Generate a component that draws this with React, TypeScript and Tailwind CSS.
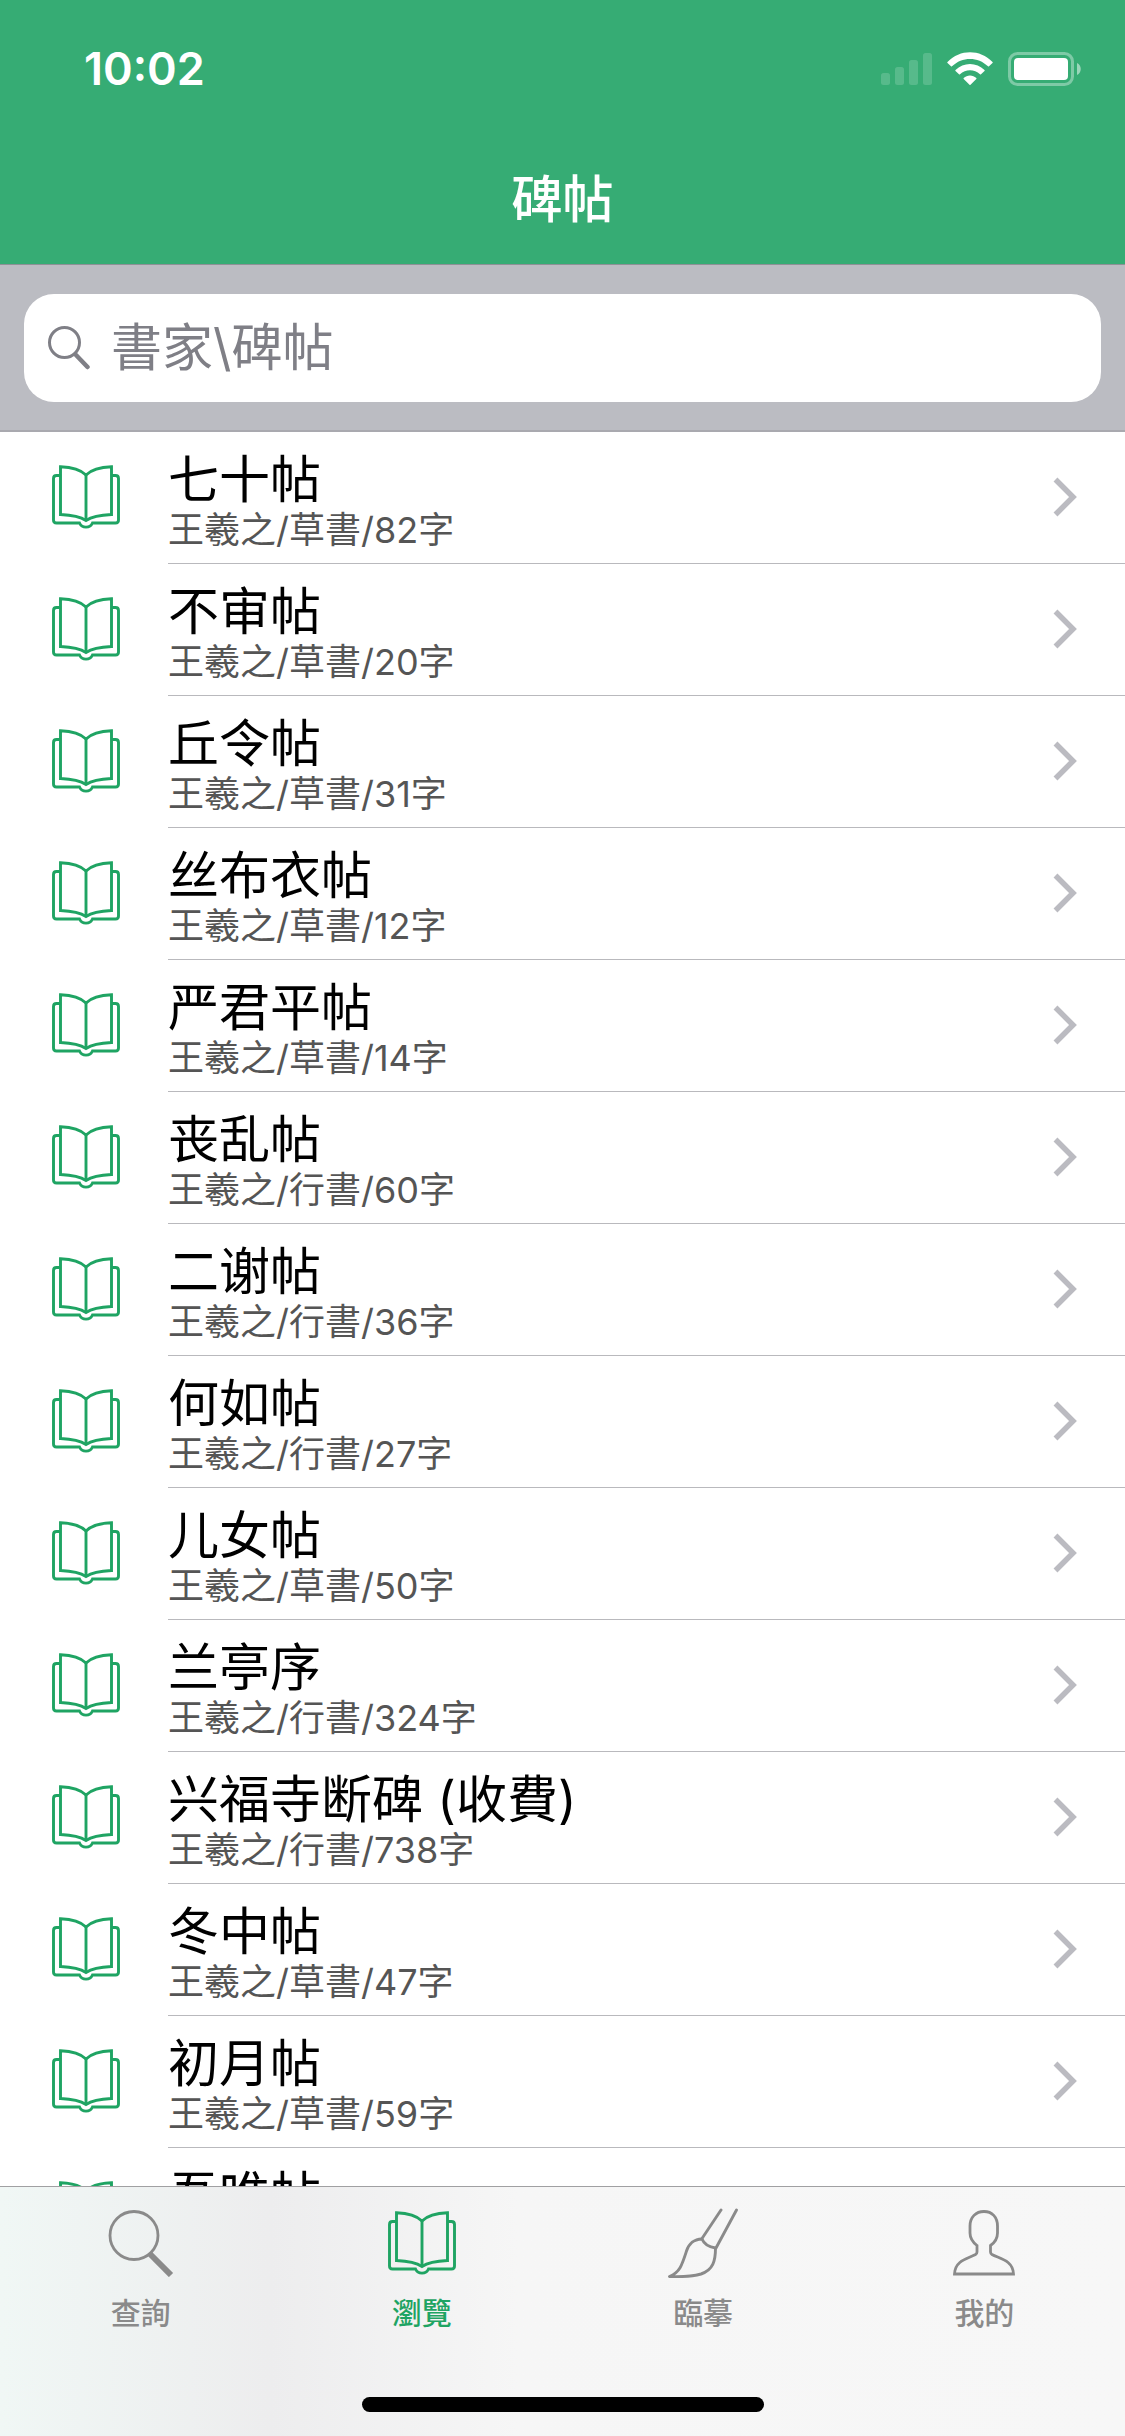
import React from 'react'

interface Work {
  title: string;
  detail: string;
}

const works: Work[] = [
  { title: '七十帖', detail: '王羲之/草書/82字' },
  { title: '不审帖', detail: '王羲之/草書/20字' },
  { title: '丘令帖', detail: '王羲之/草書/31字' },
  { title: '丝布衣帖', detail: '王羲之/草書/12字' },
  { title: '严君平帖', detail: '王羲之/草書/14字' },
  { title: '丧乱帖', detail: '王羲之/行書/60字' },
  { title: '二谢帖', detail: '王羲之/行書/36字' },
  { title: '何如帖', detail: '王羲之/行書/27字' },
  { title: '儿女帖', detail: '王羲之/草書/50字' },
  { title: '兰亭序', detail: '王羲之/行書/324字' },
  { title: '兴福寺断碑 (收費)', detail: '王羲之/行書/738字' },
  { title: '冬中帖', detail: '王羲之/草書/47字' },
  { title: '初月帖', detail: '王羲之/草書/59字' },
  { title: '吾唯帖', detail: '王羲之/草書/40字' },
]

const BookIcon: React.FC = () => (
  <svg width="68" height="64" viewBox="0 0 68 64" fill="none" stroke="currentColor" strokeWidth="2.9" aria-hidden="true">
    <path d="M8.5 1.7C19 2 28 4 34 10C40 4 49 2 59.5 1.7V49.5C49 50 40 51.5 34 55.5C28 51.5 19 50 8.5 49.5Z" />
    <path d="M34 10V55" />
    <path d="M8.5 10.5H4.5Q1.5 10.5 1.5 13.5V55Q1.5 58 4.5 58H27.5C30 63.5 38 63.5 40.5 58H63.500Q66.5 58 66.5 55V13.5Q66.5 10.5 63.5 10.5H59.5" />
  </svg>
)

const LensIcon: React.FC = () => (
  <svg width="66" height="68" viewBox="0 0 66 68" fill="none" stroke="currentColor" aria-hidden="true">
    <circle cx="26" cy="26.5" r="24" strokeWidth="2.8" />
    <path d="M42 45L63 66" strokeWidth="6" />
  </svg>
)

const BrushIcon: React.FC = () => (
  <svg width="70" height="70" viewBox="0 0 70 70" fill="none" stroke="currentColor" strokeWidth="2.9" strokeLinecap="round" strokeLinejoin="round" aria-hidden="true">
    <path d="M53 2L34 30.5M68.5 2L48 40" />
    <path d="M34 31C25 31.5 21 35.5 18.5 43C14 57 12 64 1.5 68.5C14 69 24 68.5 33 66C45 62 47.5 53 47.500 40C41 39 36 36 34 31Z" />
  </svg>
)

const PersonIcon: React.FC = () => (
  <svg width="62" height="66" viewBox="0 0 62 66" fill="none" stroke="currentColor" strokeWidth="2.8" aria-hidden="true">
    <path d="M1.500 64H60.5C60 50 46 48.500 39 44.5Q37.5 43.5 37.5 42V35.5C42.5 32 44.5 28 44.5 23V16C44.5 7 39 1.5 31 1.5S17 7 17 16V23C17 28 19.5 32 24 35.5V42Q24 43.5 22.5 44.5C15.5 48.5 2 50 1.500 64Z" />
  </svg>
)

const StatusBar: React.FC = () => (
  <div className="flex h-[132px] items-start justify-between pt-[42px] pr-[43px] pl-[84px]">
    <span className="font-['Inter',sans-serif] text-[45px] leading-[54px] font-semibold">10:02</span>
    <div className="flex h-[54px] items-center gap-[15px]">
      <svg width="51" height="34" viewBox="0 0 51 34" fill="#fff" fillOpacity="0.17" aria-hidden="true">
        <rect x="0" y="21" width="9" height="12" rx="2.5" />
        <rect x="14" y="15" width="9" height="18" rx="2.5" />
        <rect x="28" y="8" width="9" height="25" rx="2.5" />
        <rect x="42" y="1" width="9" height="32" rx="2.5" />
      </svg>
      <svg width="46" height="34" viewBox="0 0 46 34" fill="#fff" aria-hidden="true">
        <path d="M0.500 10C13-3 33-3 45.5 10Q46 10.5 45.5 11L42 14.3Q41.5 14.8 41 14.3C31 4.5 15 4.5 5 14.3Q4.5 14.8 4 14.3L0.5 11Q0 10.5 0.500 10Z" />
        <path d="M8.5 18C16.5 10 29.5 10 37.5 18Q38 18.5 37.5 19L34 22.3Q33.5 22.8 33 22.3C27.5 17 18.5 17 13 22.3Q12.5 22.8 12 22.3L8.5 19Q8 18.5 8.5 18Z" />
        <path d="M16.7 26C20 22.5 26 22.5 29.3 26Q29.8 26.5 29.3 27L23.5 32.7Q23 33.2 22.5 32.7L16.7 27Q16.2 26.5 16.7 26Z" />
      </svg>
      <svg width="74" height="34" viewBox="0 0 74 34" fill="#fff" aria-hidden="true">
        <rect x="1.5" y="1.5" width="63" height="31" rx="8" fill="none" stroke="#fff" strokeWidth="3" strokeOpacity="0.36" />
        <rect x="6" y="6" width="54" height="22" rx="4" />
        <path d="M69 11C74 13 74 21 69 23Z" fillOpacity="0.5" />
      </svg>
    </div>
  </div>
)

const WorkRow: React.FC<{ work: Work }> = ({ work }) => (
  <li>
    <a href="#" className="flex h-[132px] items-stretch pl-[52px]">
      <span className="flex w-[116px] shrink-0 items-center pb-0.5 text-[#1fa463]">
        <BookIcon />
      </span>
      <span className="flex flex-1 items-center justify-between border-b border-[#b9b9bd] pr-[47px] pb-0.5">
        <span className="flex flex-col pt-2">
          <span className="text-[51px] leading-[58px] text-black">{work.title}</span>
          <span className="text-[36px] leading-[42px] text-[#555]">{work.detail}</span>
        </span>
        <svg width="25" height="40" viewBox="0 0 25 40" fill="none" stroke="#bbbbc1" strokeWidth="5.500" aria-hidden="true">
          <path d="M2.5 2.5L20 20L2.5 37.5" />
        </svg>
      </span>
    </a>
  </li>
)

const tabs = [
  { label: '查詢', icon: <LensIcon />, active: false },
  { label: '瀏覽', icon: <BookIcon />, active: true },
  { label: '臨摹', icon: <BrushIcon />, active: false },
  { label: '我的', icon: <PersonIcon />, active: false },
]

const TabBar: React.FC = () => (
  <nav className="flex h-[250px] shrink-0 flex-col justify-between border-t border-[#a0a0a2] bg-[linear-gradient(90deg,#f0f7f5_0%,#ededee_24%,#f6f6f6_46%,#f7f7f7_100%)] pb-6">
    <div className="grid grid-cols-4">
      {tabs.map((tab) => (
        <button
          key={tab.label}
          type="button"
          className={tab.active ? 'flex flex-col items-center text-[#1fa463]' : 'flex flex-col items-center text-[#8a8a8a]'}
        >
          <span className="flex h-[104px] items-center pt-2">{tab.icon}</span>
          <span className="text-[30px] leading-[44px] font-medium">{tab.label}</span>
        </button>
      ))}
    </div>
    <div className="h-[15px] w-[402px] self-center rounded-full bg-black" />
  </nav>
)

const App: React.FC = () => {
  return (
    <div className="flex h-screen flex-col overflow-hidden bg-white font-['Inter','Noto_Sans_CJK_SC',sans-serif]">
      <header className="shrink-0 border-b border-[#8e9196] bg-[#36ac74] text-white">
        <StatusBar />
        <h1 className="flex h-[132px] items-center justify-center pt-1 text-[51px] leading-[60px] font-medium">碑帖</h1>
      </header>
      <div className="shrink-0 border-b-2 border-[#a9a9af] bg-[#bbbcc2] px-6 pt-[29px] pb-7">
        <label className="flex h-[108px] items-center gap-[21px] rounded-[30px] bg-white px-6 text-[#7f7f86]">
          <svg width="42" height="44" viewBox="0 0 42 44" fill="none" stroke="currentColor" strokeLinecap="round" aria-hidden="true">
            <circle cx="16.5" cy="16.5" r="15" strokeWidth="3" />
            <path d="M28 29L39.5 41" strokeWidth="4.5" />
          </svg>
          <input
            type="search"
            aria-label="書家\碑帖"
            placeholder="書家\碑帖"
            className="h-[60px] min-w-0 flex-1 bg-transparent text-[51px] leading-[60px] outline-none placeholder:text-[#7f7f86]"
          />
        </label>
      </div>
      <ul className="min-h-0 flex-1 overflow-y-auto [scrollbar-width:none]">
        {works.map((work) => (
          <WorkRow key={work.title} work={work} />
        ))}
      </ul>
      <TabBar />
    </div>
  )
}

export default App
